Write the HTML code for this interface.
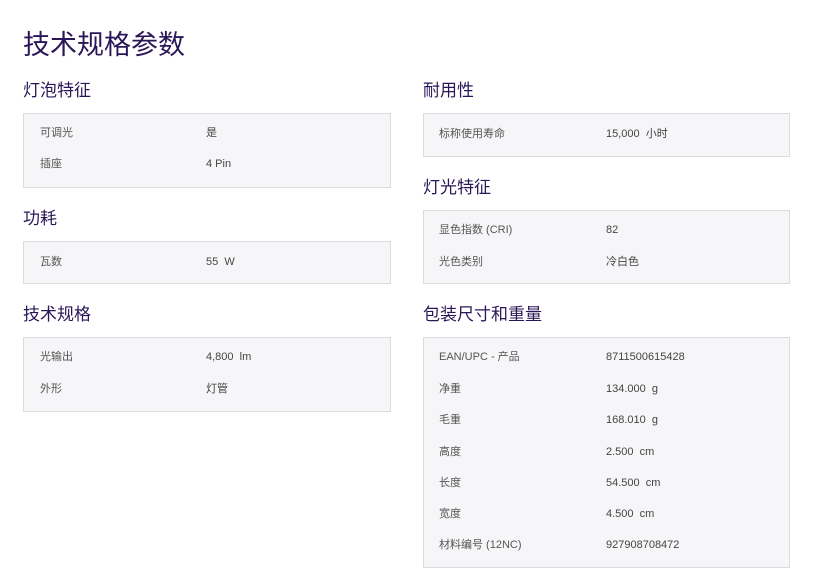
<!DOCTYPE html>
<html><head><meta charset="utf-8"><style>
body{margin:0;width:817px;height:581px;background:#fff;position:relative;overflow:hidden;font-family:"Liberation Sans","Noto Sans CJK SC",sans-serif}
.t{position:absolute;left:23px;top:26px;font-size:27px;line-height:38px;color:#2a1758;white-space:nowrap}
.h{position:absolute;font-size:17px;line-height:24px;color:#2a1758;white-space:nowrap}
.b{position:absolute;background:#f6f6f8;border:1px solid #dcdcdf;box-sizing:border-box}
.r{position:absolute;font-size:11px;line-height:14px;color:#555;white-space:nowrap}
.v{color:#444}
</style></head><body>
<div class="t">技术规格参数</div>

<div class="h" style="left:23px;top:79px">灯泡特征</div>
<div class="b" style="left:23px;top:113px;width:368px;height:75px"></div>
<div class="r" style="left:40px;top:126px">可调光</div><div class="r v" style="left:206px;top:126px">是</div>
<div class="r" style="left:40px;top:157px">插座</div><div class="r v" style="left:206px;top:157px">4 Pin</div>

<div class="h" style="left:23px;top:207px">功耗</div>
<div class="b" style="left:23px;top:241px;width:368px;height:43px"></div>
<div class="r" style="left:40px;top:255px">瓦数</div><div class="r v" style="left:206px;top:255px">55&nbsp; W</div>

<div class="h" style="left:23px;top:303px">技术规格</div>
<div class="b" style="left:23px;top:337px;width:368px;height:75px"></div>
<div class="r" style="left:40px;top:350px">光输出</div><div class="r v" style="left:206px;top:350px">4,800&nbsp; lm</div>
<div class="r" style="left:40px;top:382px">外形</div><div class="r v" style="left:206px;top:382px">灯管</div>

<div class="h" style="left:423px;top:79px">耐用性</div>
<div class="b" style="left:423px;top:113px;width:367px;height:44px"></div>
<div class="r" style="left:439px;top:127px">标称使用寿命</div><div class="r v" style="left:606px;top:127px">15,000&nbsp; 小时</div>

<div class="h" style="left:423px;top:176px">灯光特征</div>
<div class="b" style="left:423px;top:210px;width:367px;height:74px"></div>
<div class="r" style="left:439px;top:223px">显色指数 (CRI)</div><div class="r v" style="left:606px;top:223px">82</div>
<div class="r" style="left:439px;top:255px">光色类别</div><div class="r v" style="left:606px;top:255px">冷白色</div>

<div class="h" style="left:423px;top:303px">包装尺寸和重量</div>
<div class="b" style="left:423px;top:337px;width:367px;height:231px"></div>
<div class="r" style="left:439px;top:350px">EAN/UPC - 产品</div><div class="r v" style="left:606px;top:350px">8711500615428</div>
<div class="r" style="left:439px;top:382px">净重</div><div class="r v" style="left:606px;top:382px">134.000&nbsp; g</div>
<div class="r" style="left:439px;top:413px">毛重</div><div class="r v" style="left:606px;top:413px">168.010&nbsp; g</div>
<div class="r" style="left:439px;top:445px">高度</div><div class="r v" style="left:606px;top:445px">2.500&nbsp; cm</div>
<div class="r" style="left:439px;top:476px">长度</div><div class="r v" style="left:606px;top:476px">54.500&nbsp; cm</div>
<div class="r" style="left:439px;top:507px">宽度</div><div class="r v" style="left:606px;top:507px">4.500&nbsp; cm</div>
<div class="r" style="left:439px;top:538px">材料编号 (12NC)</div><div class="r v" style="left:606px;top:538px">927908708472</div>
</body></html>
